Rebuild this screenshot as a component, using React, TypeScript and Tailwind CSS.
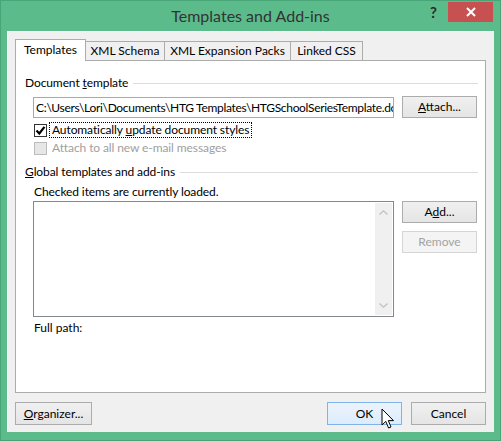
import React from "react";

const font = { fontFamily: 'Lato, "Open Sans", sans-serif' };

function Btn({
  children,
  className = "",
  variant = "normal",
}: {
  children: React.ReactNode;
  className?: string;
  variant?: "normal" | "disabled" | "hover";
}) {
  const v =
    variant === "disabled"
      ? "border-[#d5d5d5] bg-[#f4f4f4] text-[#a3a3a3]"
      : variant === "hover"
      ? "border-[#7eb4ea] bg-gradient-to-b from-[#ecf4fc] to-[#dcecfc] text-black"
      : "border-[#acacac] bg-gradient-to-b from-[#f0f0f0] to-[#e5e5e5] text-black";
  return (
    <div
      className={`flex h-[22px] w-[75px] items-center justify-center border text-[12px] leading-none ${v} ${className}`}
    >
      {children}
    </div>
  );
}

function SectionLabel({ children }: { children: React.ReactNode }) {
  return (
    <div className="flex h-[16px] items-center pl-[9px] pr-[7px]">
      <span className="whitespace-nowrap text-[12px] leading-none tracking-[-0.1px] text-black">{children}</span>
      <div className="ml-[5px] h-px flex-1 bg-[#dcdcdc]" />
    </div>
  );
}

export default function App() {
  return (
    <div
      className="flex h-[441px] w-[501px] flex-col border border-[#48a577] bg-[#5bbb8b]"
      style={font}
    >
      {/* Title bar */}
      <div className="relative flex h-[30px] shrink-0 items-center justify-center">
        <span className="text-[16px] leading-none text-[#333333]">Templates and Add-ins</span>
        <span className="absolute left-[429px] top-[4px] text-[15px] font-bold leading-none text-[#2b2b2b]">
          ?
        </span>
        <div className="absolute left-[447px] top-[1px] flex h-[20px] w-[45px] items-center justify-center bg-[#c75050]">
          <svg width="10" height="10" viewBox="0 0 10 10">
            <path d="M1 1 L9 9 M9 1 L1 9" stroke="white" strokeWidth="2" />
          </svg>
        </div>
      </div>

      {/* Inner dialog */}
      <div className="mx-[6px] mb-[8px] flex flex-1 flex-col border-l border-t border-[#f8f8f8] bg-[#f0f0f0] pl-[7px] pr-[8px] pt-[7px]">
        {/* Tabs */}
        <div className="flex h-[21px] items-end text-[12px] leading-none">
          <div className="relative z-10 -mb-px flex h-[22px] w-[71px] items-center justify-center border border-b-0 border-[#acacac] bg-white pb-[2px] text-black">
            Templates
          </div>
          <div className="flex h-[19px] w-[79px] items-center justify-center border border-b-0 border-l-0 border-[#acacac] bg-[#f0f0f0] text-black">
            XML Schema
          </div>
          <div className="flex h-[19px] w-[126px] items-center justify-center border border-b-0 border-l-0 border-[#acacac] bg-[#f0f0f0] text-black">
            XML Expansion Packs
          </div>
          <div className="flex h-[19px] w-[72px] items-center justify-center border border-b-0 border-l-0 border-[#acacac] bg-[#f0f0f0] text-black">
            Linked CSS
          </div>
        </div>

        {/* Tab panel */}
        <div className="flex h-[333px] flex-col border border-[#acacac] bg-white pt-[14px]">
          <SectionLabel>
            Document <u>t</u>emplate
          </SectionLabel>

          <div className="mt-[5px] flex h-[22px] pl-[17px] pr-[7px]">
            <div className="mt-px h-[21px] w-[361px] shrink-0 overflow-hidden border border-[#a9a9a9]">
              <div className="flex h-full items-center whitespace-nowrap pl-[2px] text-[12px] leading-none tracking-[-0.32px] text-black">
                C:\Users\Lori\Documents\HTG Templates\HTGSchoolSeriesTemplate.dotx
              </div>
            </div>
            <Btn className="ml-[8px]">
              <span>
                <u>A</u>ttach...
              </span>
            </Btn>
          </div>

          <div className="mt-[4px] flex h-[16px] items-center pl-[18px]">
            <div className="flex h-[13px] w-[13px] items-center justify-center border border-[#333333] bg-white">
              <svg width="11" height="11" viewBox="0 0 11 11">
                <path d="M1.5 5.5 L4.3 8.5 L9.5 1.8" stroke="black" strokeWidth="2.2" fill="none" />
              </svg>
            </div>
            <div className="ml-[2px] flex h-[16px] items-center whitespace-pre border border-dotted border-black px-[2px] text-[12px] leading-none tracking-[-0.1px] text-black">
              Automatically <u>u</u>pdate document styles
            </div>
          </div>

          <div className="mt-[2px] flex h-[16px] items-center pl-[18px]">
            <div className="h-[13px] w-[13px] border border-[#bcbcbc] bg-[#e6e6e6]" />
            <span className="ml-[5px] text-[12px] leading-none tracking-[-0.1px] text-[#a0a0a0]">
              Attach to all new e-mail messages
            </span>
          </div>

          <div className="mt-[8px]">
            <SectionLabel>
              <u>G</u>lobal templates and add-ins
            </SectionLabel>
          </div>

          <div className="mt-[4px] flex h-[16px] items-center pl-[18px] text-[12px] leading-none tracking-[-0.1px] text-black">
            Checked items are currently loaded.
          </div>

          <div className="mt-px flex pl-[17px] pr-[7px]">
            <div className="flex h-[116px] w-[361px] border border-[#828790] bg-white">
              <div className="flex-1" />
              <div className="my-px mr-px flex w-[17px] flex-col items-center justify-between bg-[#f0f0f0] py-[7px]">
                <svg width="9" height="5" viewBox="0 0 9 5">
                  <path d="M0.5 4.5 L4.5 0.8 L8.5 4.5" stroke="#c2c2c2" strokeWidth="1.3" fill="none" />
                </svg>
                <svg width="9" height="5" viewBox="0 0 9 5">
                  <path d="M0.5 0.5 L4.5 4.2 L8.5 0.5" stroke="#c2c2c2" strokeWidth="1.3" fill="none" />
                </svg>
              </div>
            </div>
            <div className="ml-[8px] flex flex-col gap-[8px]">
              <Btn>
                <span>
                  A<u>d</u>d...
                </span>
              </Btn>
              <Btn variant="disabled">Remove</Btn>
            </div>
          </div>

          <div className="mt-[3px] flex h-[16px] items-center pl-[18px] text-[12px] leading-none text-black">
            Full path:
          </div>
        </div>

        {/* Bottom buttons */}
        <div className="relative mt-[9px] flex">
          <Btn className="h-[23px] w-[77px]">
            <span>
              <u>O</u>rganizer...
            </span>
          </Btn>
          <Btn variant="hover" className="ml-auto h-[23px]">
            OK
          </Btn>
          <Btn className="ml-[9px] h-[23px]">Cancel</Btn>
          <svg
            className="absolute left-[366px] top-[6px]"
            width="14"
            height="22"
            viewBox="0 0 14 22"
          >
            <path
              d="M1 1 L1 17 L4.8 13.4 L7.6 20 L10 19 L7.3 12.6 L12.5 12.6 Z"
              fill="white"
              stroke="black"
              strokeWidth="1"
              strokeLinejoin="round"
            />
          </svg>
        </div>
      </div>
    </div>
  );
}
